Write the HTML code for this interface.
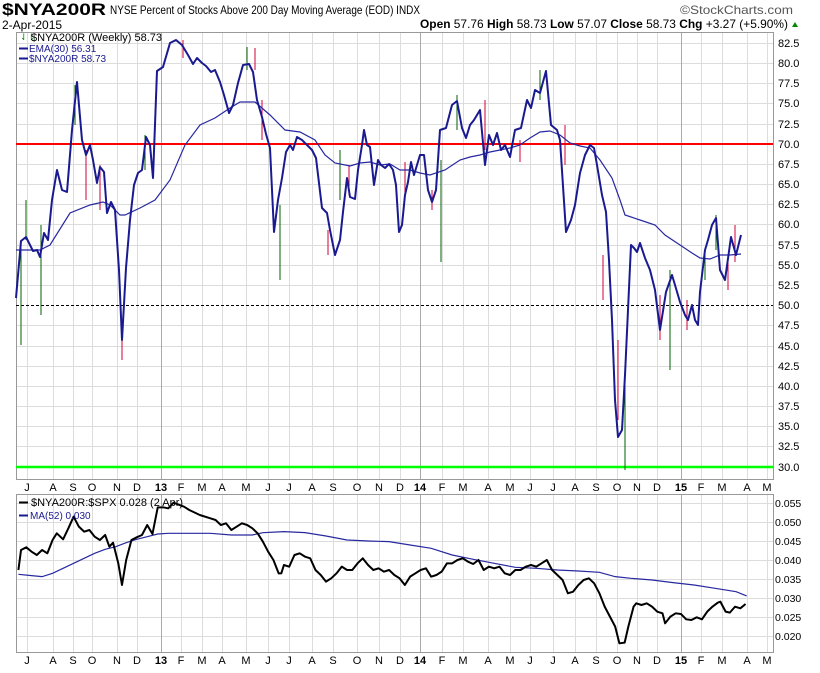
<!DOCTYPE html>
<html><head><meta charset="utf-8"><style>
html,body{margin:0;padding:0;background:#fff;}
body{width:820px;height:668px;overflow:hidden;font-family:"Liberation Sans",sans-serif;}
svg text{font-family:"Liberation Sans",sans-serif;}
</style></head><body>
<svg width="820" height="668" viewBox="0 0 820 668" xmlns="http://www.w3.org/2000/svg">
<rect width="820" height="668" fill="#fff"/>
<text x="2" y="15" font-size="17" font-weight="bold" fill="#000" textLength="104" lengthAdjust="spacingAndGlyphs">$NYA200R</text>
<text x="110" y="14" font-size="12" fill="#000" textLength="310" lengthAdjust="spacingAndGlyphs">NYSE Percent of Stocks Above 200 Day Moving Average (EOD) INDX</text>
<text x="680" y="14" font-size="12" fill="#555" textLength="113" lengthAdjust="spacingAndGlyphs">©StockCharts.com</text>
<text x="2" y="29" font-size="12" fill="#000">2-Apr-2015</text>
<text x="420" y="28" font-size="12" fill="#000" textLength="368" lengthAdjust="spacingAndGlyphs"><tspan font-weight="bold">Open</tspan> 57.76 <tspan font-weight="bold">High</tspan> 58.73 <tspan font-weight="bold">Low</tspan> 57.07 <tspan font-weight="bold">Close</tspan> 58.73 <tspan font-weight="bold">Chg</tspan> +3.27 (+5.90%)</text>
<path d="M792 27 l3 -5 l3 5z" fill="#080"/>

<g stroke="#dcdcdc" stroke-width="1">
<path d="M16 43.5H773M16 63.5H773M16 83.5H773M16 103.5H773M16 124.5H773M16 164.5H773M16 184.5H773M16 204.5H773M16 224.5H773M16 245.5H773M16 265.5H773M16 285.5H773M16 325.5H773M16 346.5H773M16 366.5H773M16 386.5H773M16 406.5H773M16 426.5H773M16 446.5H773"/>
<path d="M27.5 32V479M53.5 32V479M73.5 32V479M92.5 32V479M117.5 32V479M137.5 32V479M181.5 32V479M202.5 32V479M222.5 32V479M246.5 32V479M268.5 32V479M289.5 32V479M312.5 32V479M333.5 32V479M357.5 32V479M379.5 32V479M400.5 32V479M442.5 32V479M463.5 32V479M488.5 32V479M510.5 32V479M530.5 32V479M553.5 32V479M575.5 32V479M596.5 32V479M617.5 32V479M637.5 32V479M657.5 32V479M701.5 32V479M722.5 32V479M747.5 32V479M767.5 32V479"/>
<path d="M27.5 494V652M53.5 494V652M73.5 494V652M92.5 494V652M117.5 494V652M137.5 494V652M181.5 494V652M202.5 494V652M222.5 494V652M246.5 494V652M268.5 494V652M289.5 494V652M312.5 494V652M333.5 494V652M357.5 494V652M379.5 494V652M400.5 494V652M442.5 494V652M463.5 494V652M488.5 494V652M510.5 494V652M530.5 494V652M553.5 494V652M575.5 494V652M596.5 494V652M617.5 494V652M637.5 494V652M657.5 494V652M701.5 494V652M722.5 494V652M747.5 494V652M767.5 494V652"/>
<path d="M16 503.5H773M16 522.5H773M16 541.5H773M16 560.5H773M16 579.5H773M16 598.5H773M16 617.5H773M16 636.5H773"/>
</g>
<g stroke="#aaa" stroke-width="1"><path d="M161.5 32V479M420.5 32V479M681.5 32V479M161.5 494V652M420.5 494V652M681.5 494V652"/></g>
<rect x="16.5" y="32.5" width="757" height="447" fill="none" stroke="#999"/>
<rect x="16.5" y="494.5" width="757" height="158" fill="none" stroke="#999"/>
<path d="M16 144H773" stroke="#f00" stroke-width="2"/>
<path d="M16 467H773" stroke="#0f0" stroke-width="2.5"/>
<path d="M16 305.5H773" stroke="#000" stroke-width="1" stroke-dasharray="3,2"/>

<g stroke="#d0003a" stroke-width="1" fill="none">
<path d="M122 330V360M86 150V200M100 165V210M183 40V58M255 48V70M262 100V140M328 230V255M349 165V195M405 162V200M432 190V210M485 100V150M520 140V162M565 125V165M603 255V300M618 340V420M660 295V340M687 300V330M728 255V290M735 225V262"/>
</g>
<g stroke="#006000" stroke-width="1" fill="none">
<path d="M21 240V345M26 200V240M41 225V315M75 85V125M145 135V170M247 47V70M280 205V280M340 150V200M441 160V262M457 95V130M540 70V100M625 385V470M670 270V370M705 250V280M716 215V250"/>
</g>

<polyline fill="none" stroke="#2828a0" stroke-width="1.2" points="16,250 40,250 50,245 70,213 90,205 103,202 110,205 120,215 125,215 140,208 155,200 170,180 185,145 200,125 215,118 230,108 240,102 255,102 270,115 285,130 300,132 315,140 325,155 335,163 350,166 360,163 370,162 380,165 390,164 400,170 410,170 420,173 430,175 445,170 460,160 470,157 480,155 490,152 500,150 510,148 520,145 530,138 540,132 550,131 560,135 570,143 580,146 590,148 600,160 612,178 620,200 625,215 640,220 655,225 665,235 680,245 692,253 700,258 710,259 720,255 730,255 741,254"/>
<polyline fill="none" stroke="#1a1a90" stroke-width="2" stroke-linejoin="round" points="16,298 21,241 26,237 33,251 37,250 40,257 44,233 48,240 52,200 57,170 62,190 67,192 72,130 77,82 82,140 86,155 90,145 93,160 97,183 100,167 104,172 107,213 111,202 115,210 119,270 122,340 126,268 130,220 134,185 138,173 142,170 146,137 150,145 153,178 157,71 163,67 170,43 176,40 182,45 188,55 193,64 197,58 202,63 206,66 211,72 215,70 220,82 224,95 229,113 233,105 238,83 243,65 249,64 253,72 257,100 262,117 266,134 270,148 274,232 278,200 282,178 286,152 290,145 293,150 297,137 302,140 307,145 312,150 316,158 322,208 327,213 330,230 335,255 340,240 343,212 347,178 350,197 355,199 358,170 362,145 364,130 367,145 370,147 374,185 378,160 381,165 385,168 389,164 393,170 396,185 399,232 402,225 405,195 408,182 411,162 414,175 417,165 420,155 424,155 428,190 432,202 436,190 440,130 446,128 452,105 457,101 462,128 466,138 470,125 474,120 480,110 485,165 489,135 493,145 497,133 501,150 505,145 510,157 515,130 521,128 527,100 531,108 535,90 540,93 546,71 551,125 557,130 560,140 566,232 571,220 575,205 580,173 585,155 590,145 594,148 597,165 602,195 606,212 609,260 612,320 615,400 618,437 622,430 625,375 628,310 631,245 634,248 637,252 640,243 645,258 650,270 655,290 660,330 666,292 672,275 675,285 680,302 685,315 688,320 692,305 695,320 698,325 700,292 705,250 708,240 712,225 716,218 720,270 725,280 731,237 736,255 741,235"/>

<text x="20" y="40" font-size="9" fill="#080">⇃⇂</text>
<text x="31" y="41" font-size="11" fill="#000">$NYA200R (Weekly) 58.73</text>
<path d="M19 48.5H28M19 58.5H28" stroke="#1a1a90" stroke-width="2"/>
<text x="29" y="52" font-size="10" fill="#1a1a90">EMA(30) 56.31</text>
<text x="29" y="62" font-size="10" fill="#1a1a90">$NYA200R 58.73</text>

<g font-size="11" fill="#000">
<text x="778" y="47">82.5</text><text x="778" y="67">80.0</text><text x="778" y="87">77.5</text><text x="778" y="107">75.0</text><text x="778" y="128">72.5</text><text x="778" y="148">70.0</text><text x="778" y="168">67.5</text><text x="778" y="188">65.0</text><text x="778" y="208">62.5</text><text x="778" y="228">60.0</text><text x="778" y="249">57.5</text><text x="778" y="269">55.0</text><text x="778" y="289">52.5</text><text x="778" y="309">50.0</text><text x="778" y="329">47.5</text><text x="778" y="350">45.0</text><text x="778" y="370">42.5</text><text x="778" y="390">40.0</text><text x="778" y="410">37.5</text><text x="778" y="430">35.0</text><text x="778" y="450">32.5</text><text x="778" y="471">30.0</text>
</g>
<g font-size="10.5" fill="#000">
<text x="775" y="507">0.055</text><text x="775" y="526">0.050</text><text x="775" y="545">0.045</text><text x="775" y="564">0.040</text><text x="775" y="583">0.035</text><text x="775" y="602">0.030</text><text x="775" y="621">0.025</text><text x="775" y="640">0.020</text>
</g>

<g font-size="11" fill="#000" text-anchor="middle">
<g>
<text x="27" y="491">J</text><text x="53" y="491">A</text><text x="73" y="491">S</text><text x="92" y="491">O</text><text x="117" y="491">N</text><text x="137" y="491">D</text><text x="161" y="491" font-weight="bold">13</text><text x="181" y="491">F</text><text x="202" y="491">M</text><text x="222" y="491">A</text><text x="246" y="491">M</text><text x="268" y="491">J</text><text x="289" y="491">J</text><text x="312" y="491">A</text><text x="333" y="491">S</text><text x="357" y="491">O</text><text x="379" y="491">N</text><text x="400" y="491">D</text><text x="420" y="491" font-weight="bold">14</text><text x="442" y="491">F</text><text x="463" y="491">M</text><text x="488" y="491">A</text><text x="510" y="491">M</text><text x="530" y="491">J</text><text x="553" y="491">J</text><text x="575" y="491">A</text><text x="596" y="491">S</text><text x="617" y="491">O</text><text x="637" y="491">N</text><text x="657" y="491">D</text><text x="681" y="491" font-weight="bold">15</text><text x="701" y="491">F</text><text x="722" y="491">M</text><text x="747" y="491">A</text><text x="767" y="491">M</text>
</g>
<g transform="translate(0,173)">
<text x="27" y="491">J</text><text x="53" y="491">A</text><text x="73" y="491">S</text><text x="92" y="491">O</text><text x="117" y="491">N</text><text x="137" y="491">D</text><text x="161" y="491" font-weight="bold">13</text><text x="181" y="491">F</text><text x="202" y="491">M</text><text x="222" y="491">A</text><text x="246" y="491">M</text><text x="268" y="491">J</text><text x="289" y="491">J</text><text x="312" y="491">A</text><text x="333" y="491">S</text><text x="357" y="491">O</text><text x="379" y="491">N</text><text x="400" y="491">D</text><text x="420" y="491" font-weight="bold">14</text><text x="442" y="491">F</text><text x="463" y="491">M</text><text x="488" y="491">A</text><text x="510" y="491">M</text><text x="530" y="491">J</text><text x="553" y="491">J</text><text x="575" y="491">A</text><text x="596" y="491">S</text><text x="617" y="491">O</text><text x="637" y="491">N</text><text x="657" y="491">D</text><text x="681" y="491" font-weight="bold">15</text><text x="701" y="491">F</text><text x="722" y="491">M</text><text x="747" y="491">A</text><text x="767" y="491">M</text>
</g>
</g>

<g transform="translate(0,460) scale(0.5258,0.3333)">
<polyline fill="none" stroke="#2828a0" stroke-width="1.2" vector-effect="non-scaling-stroke" points="35,343 60,347 80,350 100,340 120,325 140,310 160,295 180,280 200,268 220,260 240,248 260,238 280,230 300,222 320,220 400,220 440,225 480,225 500,218 540,215 580,218 620,228 660,240 700,243 740,245 780,255 820,265 860,285 900,298 940,310 980,322 1020,325 1060,330 1100,333 1140,337 1170,350 1200,355 1240,360 1280,368 1320,375 1360,385 1400,395 1420,408"/>
<polyline fill="none" stroke="#000" stroke-width="2" vector-effect="non-scaling-stroke" stroke-linejoin="round" points="35,330 40,270 50,262 60,275 70,285 80,270 90,280 100,240 108,220 120,238 130,205 140,170 150,200 160,215 170,210 180,230 190,240 200,225 208,260 215,248 225,310 232,375 240,300 250,240 260,232 270,225 280,195 290,222 300,142 310,142 320,145 330,128 350,140 360,150 380,165 400,175 410,180 420,195 430,190 440,210 450,200 460,190 470,195 480,205 490,220 500,245 510,275 520,300 530,340 535,340 540,315 550,320 560,285 570,280 580,290 590,295 600,330 610,345 620,365 630,355 640,340 650,320 660,330 670,330 680,310 690,295 700,315 710,330 720,325 730,335 740,330 750,345 760,355 770,375 780,350 790,340 800,330 810,325 820,350 830,345 840,335 850,310 860,310 870,300 880,295 890,305 900,312 910,300 920,330 930,320 940,325 950,320 960,340 970,345 980,330 990,330 1000,320 1010,315 1020,320 1030,310 1040,300 1050,330 1060,345 1070,360 1080,400 1090,395 1100,375 1110,360 1120,355 1130,370 1140,400 1150,440 1160,470 1170,500 1178,550 1188,548 1195,500 1205,440 1210,430 1220,435 1230,430 1240,440 1250,455 1260,460 1265,490 1275,470 1285,460 1295,462 1305,478 1315,480 1325,472 1335,478 1345,455 1355,440 1365,428 1370,425 1380,455 1388,458 1398,440 1408,445 1418,432"/>
</g>
<path d="M19 502.5H28" stroke="#000" stroke-width="2"/>
<path d="M19 515.5H28" stroke="#1a1a90" stroke-width="2"/>
<text x="31" y="506" font-size="11" fill="#000">$NYA200R:$SPX 0.028 (2 Apr)</text>
<text x="30" y="519" font-size="10" fill="#1a1a90">MA(52) 0.030</text>
</svg>
</body></html>
